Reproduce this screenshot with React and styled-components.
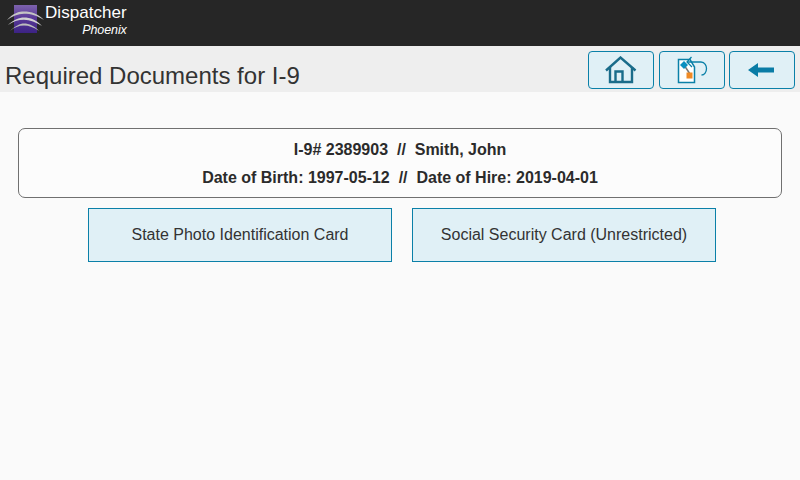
import React from "react";
import styled, { createGlobalStyle } from "styled-components";

const Global = createGlobalStyle`
  html, body { margin: 0; padding: 0; background: #fafafa; }
  body { font-family: "Liberation Sans", Arial, sans-serif; color: #2b2b2b; }
`;
const Page = styled.div`width: 800px; height: 480px; overflow: hidden; display: flex; flex-direction: column; background: #fafafa;`;
const TopBar = styled.header`height: 46px; background: #262626; display: flex; align-items: flex-start; padding-left: 6px; box-sizing: border-box;`;
const Brand = styled.div`display: flex; align-items: flex-start; padding-top: 4px;`;
const BrandText = styled.div`display: flex; flex-direction: column; align-items: flex-end; color: #fff; margin-left: 1px; margin-top: -1px;`;
const BrandName = styled.span`font-size: 17px; line-height: 20px; letter-spacing: 0.05px;`;
const BrandSub = styled.span`font-size: 12.5px; line-height: 14px; font-style: italic; letter-spacing: -0.1px;`;
const TitleBar = styled.div`height: 46px; background: #eeeeee; display: flex; justify-content: space-between; padding: 5px 5px 0 5px; box-sizing: border-box;`;
const Title = styled.h1`margin: 11px 0 0; font-size: 24px; line-height: 28px; font-weight: 400; color: #333;`;
const Actions = styled.div`display: flex; gap: 5px;`;
const IconButton = styled.button`
  width: 66px; height: 38px; padding: 0; box-sizing: border-box; background: #e0f0f6;
  border: 1px solid #0a80a8; border-radius: 4px; display: flex; align-items: center; justify-content: center;
  &:last-child { margin-left: -1px; }
`;
const Content = styled.main`padding: 36px 18px 0; display: flex; flex-direction: column; align-items: stretch;`;
const InfoCard = styled.section`height: 70px; box-sizing: border-box; border: 1px solid #707070; border-radius: 7px; background: #fcfcfc; display: flex; flex-direction: column; align-items: center; padding-top: 10px; gap: 7px;`;
const InfoLine = styled.div`font-size: 16px; line-height: 21px; font-weight: 700; color: #2b2b2b; white-space: pre;`;
const Docs = styled.div`display: flex; justify-content: center; gap: 20px; margin: 10px 0 0 4px;`;
const DocButton = styled.button`width: 304px; height: 54px; box-sizing: border-box; background: #e0f0f6; border: 1px solid #0a80a8; font-family: inherit; font-size: 16px; color: #333; padding: 0;`;

const Logo = () => (
  <svg width="38" height="34" viewBox="0 0 38 34">
    <defs>
      <linearGradient id="lg" x1="0" y1="0" x2="0" y2="1">
        <stop offset="0" stopColor="#7d63ad" />
        <stop offset="0.45" stopColor="#5a3a98" />
        <stop offset="1" stopColor="#3c2384" />
      </linearGradient>
    </defs>
    <rect x="8" y="1" width="23" height="28" fill="url(#lg)" />
    <path d="M1 16C7 9 13 7.500 18 7.500C25 7.500 33 10 38 16C31 11.500 25 9.700 18 9.700C12 9.700 6 12 1 16Z" fill="#c4c4c4" />
    <path d="M2 21C8 15.500 13 13.500 18 13.500C24 13.500 31 16 36 22C30 18 24 15.700 18 15.700C12 15.700 7 17.500 2 21Z" fill="#d2d2d2" />
    <path d="M4 27C9 22 14 19.500 18 19.500C23 19.500 29 22 33 27C28 23.500 23 21.600 18 21.600C13 21.600 8 23.500 4 27Z" fill="#bdbdbd" />
  </svg>
);
const HomeIcon = () => (
  <svg width="32" height="28" viewBox="0 0 32 28" fill="none" stroke="#1a6c8a" strokeWidth="2.400">
    <path d="M1 14.500L15.500 1.500L30.500 14.500" strokeWidth="2.400" />
    <path d="M5 11V26H27V11" />
    <path d="M10.500 26V15.500H17.500V26" />
  </svg>
);
const ReturnIcon = () => (
  <svg width="34" height="28" viewBox="0 0 34 28" fill="none">
    <path d="M3.500 3.500H15L19.500 11V26.500H3.500Z" fill="#fff" stroke="#0a80a8" strokeWidth="1.500" />
    <path d="M9 9L15 18" stroke="#777" strokeWidth="1.500" />
    <path d="M9 5L13 9L9 13L5 9Z" fill="#0a8fc0" />
    <rect x="11.500" y="16.500" width="6" height="6" fill="#f08a24" />
    <path d="M16.500 1L12 6L17 11" stroke="#0a80a8" strokeWidth="1.300" />
    <path d="M12 6H26C30 6 31.500 10 31.500 12.500C31.500 16 29.500 19 26.500 19" stroke="#0a80a8" strokeWidth="1.300" />
  </svg>
);
const BackIcon = () => (
  <svg width="28" height="16" viewBox="0 0 28 16">
    <path d="M0 8L10 1V5.500H26V10.500H10V15Z" fill="#0a7ca6" />
  </svg>
);

export default function App() {
  return (
    <Page>
      <Global />
      <TopBar>
        <Brand>
          <Logo />
          <BrandText>
            <BrandName>Dispatcher</BrandName>
            <BrandSub>Phoenix</BrandSub>
          </BrandText>
        </Brand>
      </TopBar>
      <TitleBar>
        <Title>Required Documents for I-9</Title>
        <Actions>
          <IconButton aria-label="Home"><HomeIcon /></IconButton>
          <IconButton aria-label="Return"><ReturnIcon /></IconButton>
          <IconButton aria-label="Back"><BackIcon /></IconButton>
        </Actions>
      </TitleBar>
      <Content>
        <InfoCard>
          <InfoLine>{"I-9# 2389903  //  Smith, John"}</InfoLine>
          <InfoLine>{"Date of Birth: 1997-05-12  //  Date of Hire: 2019-04-01"}</InfoLine>
        </InfoCard>
        <Docs>
          <DocButton>State Photo Identification Card</DocButton>
          <DocButton>Social Security Card (Unrestricted)</DocButton>
        </Docs>
      </Content>
    </Page>
  );
}
